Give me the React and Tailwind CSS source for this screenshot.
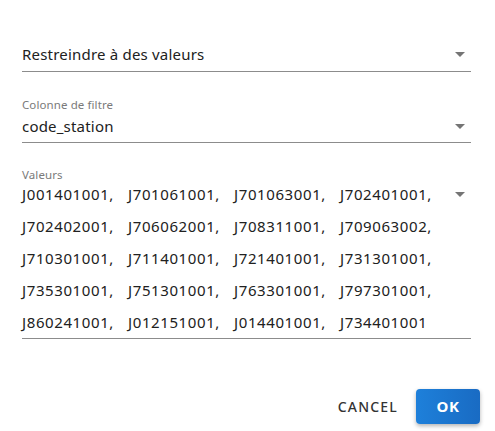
import React from "react";

const valeurs = [
  "J001401001", "J701061001", "J701063001", "J702401001",
  "J702402001", "J706062001", "J708311001", "J709063002",
  "J710301001", "J711401001", "J721401001", "J731301001",
  "J735301001", "J751301001", "J763301001", "J797301001",
  "J860241001", "J012151001", "J014401001", "J734401001",
];

const Caret = () => (
  <svg width="10" height="5" viewBox="0 0 10 5" className="shrink-0">
    <path d="M0 0 L10 0 L5 5 Z" fill="#757575" />
  </svg>
);

const App = () => {
  return (
    <div
      className="w-[495px] h-[431px] bg-white text-[#212121] overflow-hidden"
      style={{ fontFamily: "'Noto Sans', Lato, sans-serif" }}
    >
      <div className="pl-[22px] pr-[24px] pt-[42px]">
        {/* --- TYPE DE FILTRE --- */}
        <div className="flex items-center justify-between border-b border-[#8c8c8c] pb-[5px]">
          <span className="text-[15px] leading-6 tracking-[0.2px]">Restreindre à des valeurs</span>
          <span className="mr-[6px]"><Caret /></span>
        </div>

        {/* --- COLONNE --- */}
        <div className="mt-[26px]">
          <p className="text-[11.5px] leading-[14px] text-[#7a7a7a] tracking-[0.1px]">Colonne de filtre</p>
          <div className="mt-[2px] flex items-center justify-between border-b border-[#8c8c8c] pb-[4px]">
            <span className="text-[15px] leading-6 tracking-[0.2px]">code_station</span>
            <span className="mr-[6px]"><Caret /></span>
          </div>
        </div>

        {/* --- VALEURS --- */}
        <div className="mt-[25px]">
          <p className="text-[11.5px] leading-[14px] text-[#7a7a7a] tracking-[0.1px]">Valeurs</p>
          <div className="flex items-start justify-between border-b border-[#8c8c8c] pb-[4px]">
            <div className="flex flex-wrap w-[430px] gap-y-2">
              {valeurs.map((v, i) => (
                <span key={v} className="w-[106px] text-[15px] leading-6 tracking-[0.6px] whitespace-nowrap">
                  {v}{i < valeurs.length - 1 ? "," : ""}
                </span>
              ))}
            </div>
            <span className="mr-[6px] mt-[10px]"><Caret /></span>
          </div>
        </div>
      </div>

      {/* --- ACTIONS --- */}
      <div className="flex items-center justify-end gap-[18px] pr-[15px] mt-[50px]">
        <button className="text-[14px] font-medium tracking-[1.2px] text-[#333]">CANCEL</button>
        <button className="w-16 h-[35px] rounded bg-gradient-to-r from-[#1e80da] to-[#196bc3] text-white text-[15px] font-bold tracking-[0.5px] shadow-[0_2px_4px_rgba(0,0,0,0.3)]">
          OK
        </button>
      </div>
    </div>
  );
};

export default App;
